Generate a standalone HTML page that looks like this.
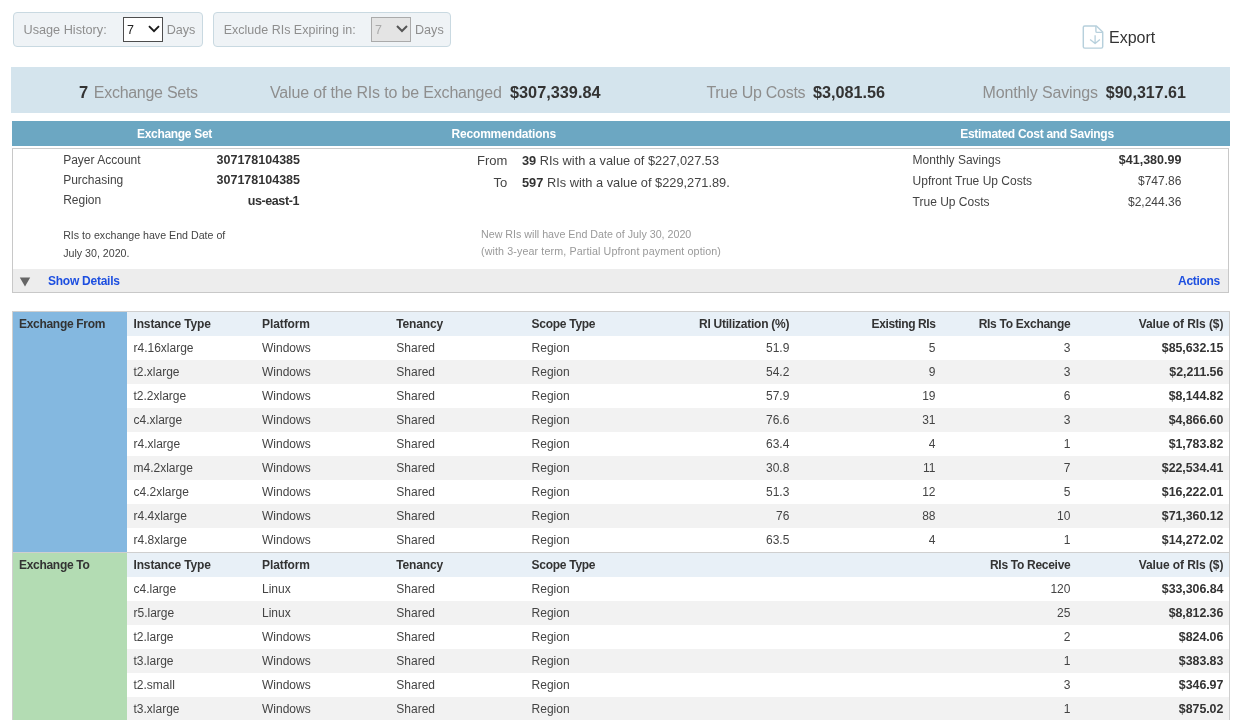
<!DOCTYPE html>
<html><head><meta charset="utf-8"><style>
html,body{margin:0;padding:0;background:#fff;width:1242px;height:726px;overflow:hidden;position:relative;font-family:"Liberation Sans", sans-serif;}
.t{position:absolute;white-space:nowrap;line-height:20px;}
#root{position:absolute;left:0;top:0;width:1242px;height:726px;will-change:transform;}
</style></head><body><div id="root">
<div style="position:absolute;left:13px;top:12px;width:190px;height:35px;box-sizing:border-box;background:#eff3f6;border:1px solid #c9d9e1;border-radius:4px;"></div>
<div style="position:absolute;left:213px;top:12px;width:238px;height:35px;box-sizing:border-box;background:#eff3f6;border:1px solid #c9d9e1;border-radius:4px;"></div>
<div class="t" style="left:23.5px;top:20.00px;font-size:12.7px;color:#8e8e8e;">Usage History:</div>
<div style="position:absolute;left:123px;top:17px;width:40px;height:25px;box-sizing:border-box;background:#fff;border:1px solid #4d4d4d;"></div>
<div class="t" style="left:127px;top:20.00px;font-size:12.5px;color:#222;">7</div>
<svg style="position:absolute;left:148px;top:25px" width="12" height="8" viewBox="0 0 12 8"><path d="M1 1.2 L6 6.2 L11 1.2" fill="none" stroke="#1a1a1a" stroke-width="1.9"/></svg>
<div class="t" style="left:166.7px;top:20.00px;font-size:12.6px;color:#8e8e8e;">Days</div>
<div class="t" style="left:223.7px;top:20.00px;font-size:12.5px;color:#8e8e8e;">Exclude RIs Expiring in:</div>
<div style="position:absolute;left:371px;top:17px;width:40px;height:25px;box-sizing:border-box;background:#e4e4e4;border:1px solid #aaa;"></div>
<div class="t" style="left:375px;top:20.00px;font-size:12.5px;color:#aaa;">7</div>
<svg style="position:absolute;left:396px;top:25px" width="12" height="8" viewBox="0 0 12 8"><path d="M1 1 L6 6 L11 1" fill="none" stroke="#555" stroke-width="2"/></svg>
<div class="t" style="left:415px;top:20.00px;font-size:12.6px;color:#8e8e8e;">Days</div>
<svg style="position:absolute;left:1076px;top:20px" width="40" height="34" viewBox="0 0 40 34"><path d="M8.7 5.9 H20.4 L26.7 12 V26.7 Q26.7 28.1 25.3 28.1 H8.7 Q7.3 28.1 7.3 26.7 V7.3 Q7.3 5.9 8.7 5.9 Z" fill="none" stroke="#b7d0dc" stroke-width="1.45" stroke-linejoin="round"/><path d="M19.9 5.9 V11.2 Q19.9 12.4 21.1 12.4 H26.7" fill="none" stroke="#b7d0dc" stroke-width="1.4"/><path d="M19.1 15.2 V23.4 M14.1 19.4 L19.1 23.6 L23.9 19.4" fill="none" stroke="#b7d0dc" stroke-width="1.3" stroke-linejoin="round"/></svg>
<div class="t" style="left:1109px;top:28.00px;font-size:16px;color:#333;">Export</div>
<div style="position:absolute;left:11px;top:67px;width:1219px;height:46px;background:#d4e4ed;"></div>
<div class="t" style="left:79px;top:82.00px;font-size:16.5px;font-weight:bold;color:#333;">7</div>
<div class="t" style="left:93.8px;top:83.00px;font-size:16px;color:#8e8e8e;letter-spacing:-0.28px;">Exchange Sets</div>
<div class="t" style="left:270px;top:83.00px;font-size:16px;color:#8e8e8e;letter-spacing:-0.17px;">Value of the RIs to be Exchanged</div>
<div class="t" style="left:510px;top:82.00px;font-size:16.3px;font-weight:bold;color:#333;">$307,339.84</div>
<div class="t" style="left:706.4px;top:83.00px;font-size:16px;color:#8e8e8e;letter-spacing:-0.28px;">True Up Costs</div>
<div class="t" style="left:813px;top:82.00px;font-size:16.2px;font-weight:bold;color:#333;">$3,081.56</div>
<div class="t" style="left:982.6px;top:83.00px;font-size:16px;color:#8e8e8e;letter-spacing:-0.14px;">Monthly Savings</div>
<div class="t" style="left:1105.8px;top:83.00px;font-size:16px;font-weight:bold;color:#333;">$90,317.61</div>
<div style="position:absolute;left:12px;top:121px;width:1218px;height:25px;background:#6ca7c2;"></div>
<div class="t" style="left:-125.5px;width:600px;text-align:center;top:124.00px;font-size:12px;font-weight:bold;color:#fff;letter-spacing:-0.3px;">Exchange Set</div>
<div class="t" style="left:203.8px;width:600px;text-align:center;top:124.00px;font-size:12px;font-weight:bold;color:#fff;letter-spacing:-0.2px;">Recommendations</div>
<div class="t" style="left:737px;width:600px;text-align:center;top:124.00px;font-size:12px;font-weight:bold;color:#fff;letter-spacing:-0.3px;">Estimated Cost and Savings</div>
<div style="position:absolute;left:12px;top:148px;width:1217px;height:1px;background:#cccccc;"></div>
<div style="position:absolute;left:12px;top:149px;width:1px;height:144px;background:#c8c8c8;"></div>
<div style="position:absolute;left:1228px;top:149px;width:1px;height:144px;background:#c8c8c8;"></div>
<div style="position:absolute;left:12px;top:292px;width:1217px;height:1px;background:#c8c8c8;"></div>
<div style="position:absolute;left:13px;top:269px;width:1215px;height:23px;background:#ededed;"></div>
<div class="t" style="left:63.2px;top:150.00px;font-size:12px;color:#444;">Payer Account</div>
<div class="t" style="left:63.2px;top:170.00px;font-size:12px;color:#444;">Purchasing</div>
<div class="t" style="left:63.2px;top:190.00px;font-size:12px;color:#444;">Region</div>
<div class="t" style="right:942px;text-align:right;top:150.00px;font-size:12.5px;font-weight:bold;color:#333;">307178104385</div>
<div class="t" style="right:942px;text-align:right;top:170.00px;font-size:12.5px;font-weight:bold;color:#333;">307178104385</div>
<div class="t" style="right:943px;text-align:right;top:191.00px;font-size:12.5px;font-weight:bold;color:#333;letter-spacing:-0.4px;">us-east-1</div>
<div class="t" style="left:63.2px;top:225.00px;font-size:10.65px;color:#444;">RIs to exchange have End Date of</div>
<div class="t" style="left:63.2px;top:243.00px;font-size:10.65px;color:#444;">July 30, 2020.</div>
<div class="t" style="right:734.7px;text-align:right;top:151.00px;font-size:13px;color:#444;">From</div>
<div class="t" style="right:734.7px;text-align:right;top:173.00px;font-size:13px;color:#444;">To</div>
<div class="t" style="left:522px;top:151.00px;font-size:12.8px;color:#444;"><b style="color:#333">39</b> RIs with a value of $227,027.53</div>
<div class="t" style="left:522px;top:173.00px;font-size:12.8px;color:#444;"><b style="color:#333">597</b> RIs with a value of $229,271.89.</div>
<div class="t" style="left:481px;top:224.00px;font-size:10.7px;color:#999;">New RIs will have End Date of July 30, 2020</div>
<div class="t" style="left:481px;top:241.00px;font-size:10.7px;color:#999;letter-spacing:0.12px;">(with 3-year term, Partial Upfront payment option)</div>
<div class="t" style="left:912.6px;top:150.00px;font-size:12px;color:#444;">Monthly Savings</div>
<div class="t" style="left:912.6px;top:171.00px;font-size:12px;color:#444;">Upfront True Up Costs</div>
<div class="t" style="left:912.6px;top:192.00px;font-size:12px;color:#444;">True Up Costs</div>
<div class="t" style="right:60.59999999999991px;text-align:right;top:150.00px;font-size:12.5px;font-weight:bold;color:#333;">$41,380.99</div>
<div class="t" style="right:60.59999999999991px;text-align:right;top:171.00px;font-size:12px;color:#444;">$747.86</div>
<div class="t" style="right:60.59999999999991px;text-align:right;top:192.00px;font-size:12px;color:#444;">$2,244.36</div>
<svg style="position:absolute;left:19px;top:277px" width="12" height="10" viewBox="0 0 12 10"><path d="M0.8 0.5 H11.2 L6 9.5 Z" fill="#666"/></svg>
<div class="t" style="left:48px;top:271.00px;font-size:12px;font-weight:bold;color:#1d4fe0;letter-spacing:-0.25px;">Show Details</div>
<div class="t" style="right:22px;text-align:right;top:271.00px;font-size:12px;font-weight:bold;color:#1d4fe0;letter-spacing:-0.3px;">Actions</div>
<div style="position:absolute;left:12px;top:311px;width:1218px;height:1px;background:#cfcfcf;"></div>
<div style="position:absolute;left:12px;top:311px;width:1px;height:409px;background:#cfcfcf;"></div>
<div style="position:absolute;left:1229px;top:311px;width:1px;height:409px;background:#cfcfcf;"></div>
<div style="position:absolute;left:13px;top:312px;width:114px;height:240px;background:#84b8e0;"></div>
<div style="position:absolute;left:13px;top:553px;width:114px;height:167px;background:#b3dcb3;"></div>
<div style="position:absolute;left:127px;top:312px;width:1102px;height:24px;background:#e8f0f7;"></div>
<div style="position:absolute;left:12px;top:552px;width:1218px;height:1px;background:#cfcfcf;"></div>
<div style="position:absolute;left:127px;top:553px;width:1102px;height:24px;background:#e8f0f7;"></div>
<div class="t" style="left:19px;top:314.00px;font-size:12px;font-weight:bold;color:#333;letter-spacing:-0.3px;">Exchange From</div>
<div class="t" style="left:133.5px;top:314.00px;font-size:12px;font-weight:bold;color:#333;letter-spacing:-0.15px;">Instance Type</div>
<div class="t" style="left:262px;top:314.00px;font-size:12px;font-weight:bold;color:#333;letter-spacing:-0.09px;">Platform</div>
<div class="t" style="left:396.3px;top:314.00px;font-size:12px;font-weight:bold;color:#333;letter-spacing:-0.16px;">Tenancy</div>
<div class="t" style="left:531.6px;top:314.00px;font-size:12px;font-weight:bold;color:#333;letter-spacing:-0.28px;">Scope Type</div>
<div class="t" style="right:452.70000000000005px;text-align:right;top:314.00px;font-size:12px;font-weight:bold;color:#333;letter-spacing:-0.24px;">RI Utilization (%)</div>
<div class="t" style="right:306.5px;text-align:right;top:314.00px;font-size:12px;font-weight:bold;color:#333;letter-spacing:-0.4px;">Existing RIs</div>
<div class="t" style="right:171.5999999999999px;text-align:right;top:314.00px;font-size:12px;font-weight:bold;color:#333;letter-spacing:-0.27px;">RIs To Exchange</div>
<div class="t" style="right:18.700000000000045px;text-align:right;top:314.00px;font-size:12px;font-weight:bold;color:#333;letter-spacing:-0.09px;">Value of RIs ($)</div>
<div class="t" style="left:133.5px;top:338.00px;font-size:12px;color:#444;">r4.16xlarge</div>
<div class="t" style="left:262px;top:338.00px;font-size:12px;color:#444;">Windows</div>
<div class="t" style="left:396.3px;top:338.00px;font-size:12px;color:#444;">Shared</div>
<div class="t" style="left:531.6px;top:338.00px;font-size:12px;color:#444;">Region</div>
<div class="t" style="right:452.70000000000005px;text-align:right;top:338.00px;font-size:12px;color:#444;">51.9</div>
<div class="t" style="right:306.5px;text-align:right;top:338.00px;font-size:12px;color:#444;">5</div>
<div class="t" style="right:171.5999999999999px;text-align:right;top:338.00px;font-size:12px;color:#444;">3</div>
<div class="t" style="right:18.700000000000045px;text-align:right;top:338.00px;font-size:12.4px;font-weight:bold;color:#333;letter-spacing:-0.05px;">$85,632.15</div>
<div style="position:absolute;left:127px;top:360px;width:1102px;height:24px;background:#f2f2f2;"></div>
<div class="t" style="left:133.5px;top:362.00px;font-size:12px;color:#444;">t2.xlarge</div>
<div class="t" style="left:262px;top:362.00px;font-size:12px;color:#444;">Windows</div>
<div class="t" style="left:396.3px;top:362.00px;font-size:12px;color:#444;">Shared</div>
<div class="t" style="left:531.6px;top:362.00px;font-size:12px;color:#444;">Region</div>
<div class="t" style="right:452.70000000000005px;text-align:right;top:362.00px;font-size:12px;color:#444;">54.2</div>
<div class="t" style="right:306.5px;text-align:right;top:362.00px;font-size:12px;color:#444;">9</div>
<div class="t" style="right:171.5999999999999px;text-align:right;top:362.00px;font-size:12px;color:#444;">3</div>
<div class="t" style="right:18.700000000000045px;text-align:right;top:362.00px;font-size:12.4px;font-weight:bold;color:#333;letter-spacing:-0.05px;">$2,211.56</div>
<div class="t" style="left:133.5px;top:386.00px;font-size:12px;color:#444;">t2.2xlarge</div>
<div class="t" style="left:262px;top:386.00px;font-size:12px;color:#444;">Windows</div>
<div class="t" style="left:396.3px;top:386.00px;font-size:12px;color:#444;">Shared</div>
<div class="t" style="left:531.6px;top:386.00px;font-size:12px;color:#444;">Region</div>
<div class="t" style="right:452.70000000000005px;text-align:right;top:386.00px;font-size:12px;color:#444;">57.9</div>
<div class="t" style="right:306.5px;text-align:right;top:386.00px;font-size:12px;color:#444;">19</div>
<div class="t" style="right:171.5999999999999px;text-align:right;top:386.00px;font-size:12px;color:#444;">6</div>
<div class="t" style="right:18.700000000000045px;text-align:right;top:386.00px;font-size:12.4px;font-weight:bold;color:#333;letter-spacing:-0.05px;">$8,144.82</div>
<div style="position:absolute;left:127px;top:408px;width:1102px;height:24px;background:#f2f2f2;"></div>
<div class="t" style="left:133.5px;top:410.00px;font-size:12px;color:#444;">c4.xlarge</div>
<div class="t" style="left:262px;top:410.00px;font-size:12px;color:#444;">Windows</div>
<div class="t" style="left:396.3px;top:410.00px;font-size:12px;color:#444;">Shared</div>
<div class="t" style="left:531.6px;top:410.00px;font-size:12px;color:#444;">Region</div>
<div class="t" style="right:452.70000000000005px;text-align:right;top:410.00px;font-size:12px;color:#444;">76.6</div>
<div class="t" style="right:306.5px;text-align:right;top:410.00px;font-size:12px;color:#444;">31</div>
<div class="t" style="right:171.5999999999999px;text-align:right;top:410.00px;font-size:12px;color:#444;">3</div>
<div class="t" style="right:18.700000000000045px;text-align:right;top:410.00px;font-size:12.4px;font-weight:bold;color:#333;letter-spacing:-0.05px;">$4,866.60</div>
<div class="t" style="left:133.5px;top:434.00px;font-size:12px;color:#444;">r4.xlarge</div>
<div class="t" style="left:262px;top:434.00px;font-size:12px;color:#444;">Windows</div>
<div class="t" style="left:396.3px;top:434.00px;font-size:12px;color:#444;">Shared</div>
<div class="t" style="left:531.6px;top:434.00px;font-size:12px;color:#444;">Region</div>
<div class="t" style="right:452.70000000000005px;text-align:right;top:434.00px;font-size:12px;color:#444;">63.4</div>
<div class="t" style="right:306.5px;text-align:right;top:434.00px;font-size:12px;color:#444;">4</div>
<div class="t" style="right:171.5999999999999px;text-align:right;top:434.00px;font-size:12px;color:#444;">1</div>
<div class="t" style="right:18.700000000000045px;text-align:right;top:434.00px;font-size:12.4px;font-weight:bold;color:#333;letter-spacing:-0.05px;">$1,783.82</div>
<div style="position:absolute;left:127px;top:456px;width:1102px;height:24px;background:#f2f2f2;"></div>
<div class="t" style="left:133.5px;top:458.00px;font-size:12px;color:#444;">m4.2xlarge</div>
<div class="t" style="left:262px;top:458.00px;font-size:12px;color:#444;">Windows</div>
<div class="t" style="left:396.3px;top:458.00px;font-size:12px;color:#444;">Shared</div>
<div class="t" style="left:531.6px;top:458.00px;font-size:12px;color:#444;">Region</div>
<div class="t" style="right:452.70000000000005px;text-align:right;top:458.00px;font-size:12px;color:#444;">30.8</div>
<div class="t" style="right:306.5px;text-align:right;top:458.00px;font-size:12px;color:#444;">11</div>
<div class="t" style="right:171.5999999999999px;text-align:right;top:458.00px;font-size:12px;color:#444;">7</div>
<div class="t" style="right:18.700000000000045px;text-align:right;top:458.00px;font-size:12.4px;font-weight:bold;color:#333;letter-spacing:-0.05px;">$22,534.41</div>
<div class="t" style="left:133.5px;top:482.00px;font-size:12px;color:#444;">c4.2xlarge</div>
<div class="t" style="left:262px;top:482.00px;font-size:12px;color:#444;">Windows</div>
<div class="t" style="left:396.3px;top:482.00px;font-size:12px;color:#444;">Shared</div>
<div class="t" style="left:531.6px;top:482.00px;font-size:12px;color:#444;">Region</div>
<div class="t" style="right:452.70000000000005px;text-align:right;top:482.00px;font-size:12px;color:#444;">51.3</div>
<div class="t" style="right:306.5px;text-align:right;top:482.00px;font-size:12px;color:#444;">12</div>
<div class="t" style="right:171.5999999999999px;text-align:right;top:482.00px;font-size:12px;color:#444;">5</div>
<div class="t" style="right:18.700000000000045px;text-align:right;top:482.00px;font-size:12.4px;font-weight:bold;color:#333;letter-spacing:-0.05px;">$16,222.01</div>
<div style="position:absolute;left:127px;top:504px;width:1102px;height:24px;background:#f2f2f2;"></div>
<div class="t" style="left:133.5px;top:506.00px;font-size:12px;color:#444;">r4.4xlarge</div>
<div class="t" style="left:262px;top:506.00px;font-size:12px;color:#444;">Windows</div>
<div class="t" style="left:396.3px;top:506.00px;font-size:12px;color:#444;">Shared</div>
<div class="t" style="left:531.6px;top:506.00px;font-size:12px;color:#444;">Region</div>
<div class="t" style="right:452.70000000000005px;text-align:right;top:506.00px;font-size:12px;color:#444;">76</div>
<div class="t" style="right:306.5px;text-align:right;top:506.00px;font-size:12px;color:#444;">88</div>
<div class="t" style="right:171.5999999999999px;text-align:right;top:506.00px;font-size:12px;color:#444;">10</div>
<div class="t" style="right:18.700000000000045px;text-align:right;top:506.00px;font-size:12.4px;font-weight:bold;color:#333;letter-spacing:-0.05px;">$71,360.12</div>
<div class="t" style="left:133.5px;top:530.00px;font-size:12px;color:#444;">r4.8xlarge</div>
<div class="t" style="left:262px;top:530.00px;font-size:12px;color:#444;">Windows</div>
<div class="t" style="left:396.3px;top:530.00px;font-size:12px;color:#444;">Shared</div>
<div class="t" style="left:531.6px;top:530.00px;font-size:12px;color:#444;">Region</div>
<div class="t" style="right:452.70000000000005px;text-align:right;top:530.00px;font-size:12px;color:#444;">63.5</div>
<div class="t" style="right:306.5px;text-align:right;top:530.00px;font-size:12px;color:#444;">4</div>
<div class="t" style="right:171.5999999999999px;text-align:right;top:530.00px;font-size:12px;color:#444;">1</div>
<div class="t" style="right:18.700000000000045px;text-align:right;top:530.00px;font-size:12.4px;font-weight:bold;color:#333;letter-spacing:-0.05px;">$14,272.02</div>
<div class="t" style="left:19px;top:555.00px;font-size:12px;font-weight:bold;color:#333;letter-spacing:-0.3px;">Exchange To</div>
<div class="t" style="left:133.5px;top:555.00px;font-size:12px;font-weight:bold;color:#333;letter-spacing:-0.15px;">Instance Type</div>
<div class="t" style="left:262px;top:555.00px;font-size:12px;font-weight:bold;color:#333;letter-spacing:-0.09px;">Platform</div>
<div class="t" style="left:396.3px;top:555.00px;font-size:12px;font-weight:bold;color:#333;letter-spacing:-0.16px;">Tenancy</div>
<div class="t" style="left:531.6px;top:555.00px;font-size:12px;font-weight:bold;color:#333;letter-spacing:-0.28px;">Scope Type</div>
<div class="t" style="right:171.5999999999999px;text-align:right;top:555.00px;font-size:12px;font-weight:bold;color:#333;letter-spacing:-0.29px;">RIs To Receive</div>
<div class="t" style="right:18.700000000000045px;text-align:right;top:555.00px;font-size:12px;font-weight:bold;color:#333;letter-spacing:-0.09px;">Value of RIs ($)</div>
<div class="t" style="left:133.5px;top:579.00px;font-size:12px;color:#444;">c4.large</div>
<div class="t" style="left:262px;top:579.00px;font-size:12px;color:#444;">Linux</div>
<div class="t" style="left:396.3px;top:579.00px;font-size:12px;color:#444;">Shared</div>
<div class="t" style="left:531.6px;top:579.00px;font-size:12px;color:#444;">Region</div>
<div class="t" style="right:171.5999999999999px;text-align:right;top:579.00px;font-size:12px;color:#444;">120</div>
<div class="t" style="right:18.700000000000045px;text-align:right;top:579.00px;font-size:12.4px;font-weight:bold;color:#333;letter-spacing:-0.05px;">$33,306.84</div>
<div style="position:absolute;left:127px;top:601px;width:1102px;height:24px;background:#f2f2f2;"></div>
<div class="t" style="left:133.5px;top:603.00px;font-size:12px;color:#444;">r5.large</div>
<div class="t" style="left:262px;top:603.00px;font-size:12px;color:#444;">Linux</div>
<div class="t" style="left:396.3px;top:603.00px;font-size:12px;color:#444;">Shared</div>
<div class="t" style="left:531.6px;top:603.00px;font-size:12px;color:#444;">Region</div>
<div class="t" style="right:171.5999999999999px;text-align:right;top:603.00px;font-size:12px;color:#444;">25</div>
<div class="t" style="right:18.700000000000045px;text-align:right;top:603.00px;font-size:12.4px;font-weight:bold;color:#333;letter-spacing:-0.05px;">$8,812.36</div>
<div class="t" style="left:133.5px;top:627.00px;font-size:12px;color:#444;">t2.large</div>
<div class="t" style="left:262px;top:627.00px;font-size:12px;color:#444;">Windows</div>
<div class="t" style="left:396.3px;top:627.00px;font-size:12px;color:#444;">Shared</div>
<div class="t" style="left:531.6px;top:627.00px;font-size:12px;color:#444;">Region</div>
<div class="t" style="right:171.5999999999999px;text-align:right;top:627.00px;font-size:12px;color:#444;">2</div>
<div class="t" style="right:18.700000000000045px;text-align:right;top:627.00px;font-size:12.4px;font-weight:bold;color:#333;letter-spacing:-0.05px;">$824.06</div>
<div style="position:absolute;left:127px;top:649px;width:1102px;height:24px;background:#f2f2f2;"></div>
<div class="t" style="left:133.5px;top:651.00px;font-size:12px;color:#444;">t3.large</div>
<div class="t" style="left:262px;top:651.00px;font-size:12px;color:#444;">Windows</div>
<div class="t" style="left:396.3px;top:651.00px;font-size:12px;color:#444;">Shared</div>
<div class="t" style="left:531.6px;top:651.00px;font-size:12px;color:#444;">Region</div>
<div class="t" style="right:171.5999999999999px;text-align:right;top:651.00px;font-size:12px;color:#444;">1</div>
<div class="t" style="right:18.700000000000045px;text-align:right;top:651.00px;font-size:12.4px;font-weight:bold;color:#333;letter-spacing:-0.05px;">$383.83</div>
<div class="t" style="left:133.5px;top:675.00px;font-size:12px;color:#444;">t2.small</div>
<div class="t" style="left:262px;top:675.00px;font-size:12px;color:#444;">Windows</div>
<div class="t" style="left:396.3px;top:675.00px;font-size:12px;color:#444;">Shared</div>
<div class="t" style="left:531.6px;top:675.00px;font-size:12px;color:#444;">Region</div>
<div class="t" style="right:171.5999999999999px;text-align:right;top:675.00px;font-size:12px;color:#444;">3</div>
<div class="t" style="right:18.700000000000045px;text-align:right;top:675.00px;font-size:12.4px;font-weight:bold;color:#333;letter-spacing:-0.05px;">$346.97</div>
<div style="position:absolute;left:127px;top:697px;width:1102px;height:23px;background:#f2f2f2;"></div>
<div class="t" style="left:133.5px;top:699.00px;font-size:12px;color:#444;">t3.xlarge</div>
<div class="t" style="left:262px;top:699.00px;font-size:12px;color:#444;">Windows</div>
<div class="t" style="left:396.3px;top:699.00px;font-size:12px;color:#444;">Shared</div>
<div class="t" style="left:531.6px;top:699.00px;font-size:12px;color:#444;">Region</div>
<div class="t" style="right:171.5999999999999px;text-align:right;top:699.00px;font-size:12px;color:#444;">1</div>
<div class="t" style="right:18.700000000000045px;text-align:right;top:699.00px;font-size:12.4px;font-weight:bold;color:#333;letter-spacing:-0.05px;">$875.02</div>
</div></body></html>
